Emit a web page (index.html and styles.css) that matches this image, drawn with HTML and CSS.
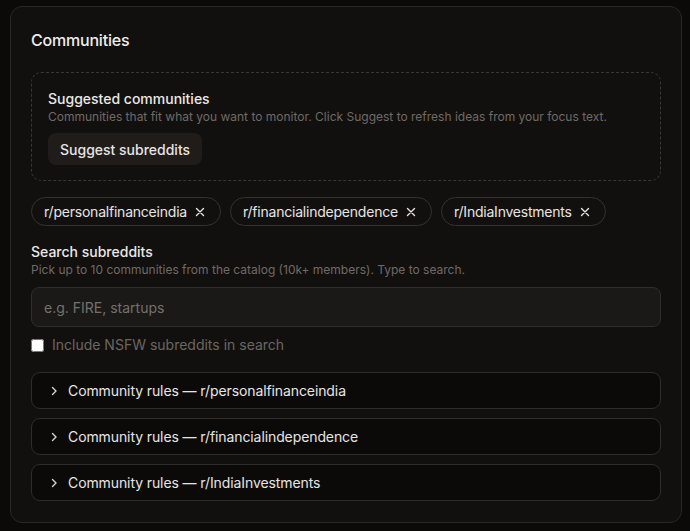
FILE: index.html
```html
<!DOCTYPE html>
<html lang="en">
<head>
    <meta charset="UTF-8">
    <meta name="viewport" content="width=device-width, initial-scale=1.0">
    <title>Communities</title>
    <link rel="stylesheet" href="styles.css">
</head>
<body>
    <section class="card">
        <h2 class="card-title">Communities</h2>

        <div class="suggest-box">
            <div class="field-label">Suggested communities</div>
            <p class="hint">Communities that fit what you want to monitor. Click Suggest to refresh ideas from your focus text.</p>
            <button class="btn-secondary" type="button">Suggest subreddits</button>
        </div>

        <div class="chips">
            <span class="chip">r/personalfinanceindia
                <button class="chip-remove" type="button" aria-label="Remove">
                    <svg viewBox="0 0 12 12" width="12" height="12"><path d="M2.5 2.5l7 7M9.5 2.5l-7 7"/></svg>
                </button>
            </span>
            <span class="chip">r/financialindependence
                <button class="chip-remove" type="button" aria-label="Remove">
                    <svg viewBox="0 0 12 12" width="12" height="12"><path d="M2.5 2.5l7 7M9.5 2.5l-7 7"/></svg>
                </button>
            </span>
            <span class="chip">r/IndiaInvestments
                <button class="chip-remove" type="button" aria-label="Remove">
                    <svg viewBox="0 0 12 12" width="12" height="12"><path d="M2.5 2.5l7 7M9.5 2.5l-7 7"/></svg>
                </button>
            </span>
        </div>

        <div class="search">
            <label class="field-label" for="subreddit-search">Search subreddits</label>
            <p class="hint">Pick up to 10 communities from the catalog (10k+ members). Type to search.</p>
            <input class="text-input" type="text" id="subreddit-search" placeholder="e.g. FIRE, startups">
            <label class="check-row">
                <input type="checkbox" class="check">
                <span>Include NSFW subreddits in search</span>
            </label>
        </div>

        <div class="rules">
            <details class="rule">
                <summary>
                    <svg class="chevron" viewBox="0 0 12 12" width="12" height="12"><path d="M4.5 2.5L8 6l-3.5 3.5"/></svg>
                    Community rules — r/personalfinanceindia
                </summary>
            </details>
            <details class="rule">
                <summary>
                    <svg class="chevron" viewBox="0 0 12 12" width="12" height="12"><path d="M4.5 2.5L8 6l-3.5 3.5"/></svg>
                    Community rules — r/financialindependence
                </summary>
            </details>
            <details class="rule">
                <summary>
                    <svg class="chevron" viewBox="0 0 12 12" width="12" height="12"><path d="M4.5 2.5L8 6l-3.5 3.5"/></svg>
                    Community rules — r/IndiaInvestments
                </summary>
            </details>
        </div>
    </section>
</body>
</html>
```

FILE: styles.css
```css
* {
    box-sizing: border-box;
}

body {
    margin: 0;
    padding: 6px 8px 0 10px;
    background-color: #0c0a09;
    color: #e7e5e4;
    font-family: Inter, "Noto Sans", sans-serif;
    font-size: 14px;
}

.card {
    background-color: #12100e;
    border: 1px solid #2a2725;
    border-radius: 12px;
    padding: 21px 20px 21px 20px;
}

.card-title {
    margin: 0 0 20px;
    font-size: 16px;
    line-height: 24px;
    font-weight: 500;
    letter-spacing: -0.2px;
    color: #f0eeec;
}

.suggest-box {
    border: 1px dashed #3a3633;
    border-radius: 10px;
    padding: 16px 16px 15px;
}

.field-label {
    display: block;
    font-size: 14px;
    line-height: 20px;
    font-weight: 500;
    color: #ebe9e7;
}

.hint {
    margin: 0;
    font-size: 12px;
    line-height: 16px;
    color: #6f6a66;
}

.btn-secondary {
    margin-top: 8px;
    height: 32px;
    padding: 0 12px;
    border: none;
    border-radius: 8px;
    background-color: #1f1c1a;
    color: #e7e5e4;
    font-family: inherit;
    font-size: 14px;
    font-weight: 500;
}

.chips {
    display: flex;
    flex-wrap: wrap;
    gap: 9px;
    margin-top: 16px;
}

.chip {
    display: inline-flex;
    align-items: center;
    gap: 7px;
    height: 29px;
    padding: 0 14px 0 12px;
    border: 1px solid #35312e;
    border-radius: 999px;
    font-size: 14px;
    letter-spacing: -0.22px;
    color: #e7e5e4;
}

.chip-remove {
    display: flex;
    padding: 0;
    border: none;
    background: none;
    color: #e7e5e4;
}

.chip-remove svg,
.chevron {
    fill: none;
    stroke: currentColor;
    stroke-width: 1.4;
    stroke-linecap: round;
    stroke-linejoin: round;
}

.search {
    margin-top: 16px;
}

.text-input {
    display: block;
    width: 100%;
    height: 40px;
    margin-top: 9px;
    padding: 0 12px;
    border: 1px solid #302d2a;
    border-radius: 8px;
    background-color: #1b1917;
    color: #e7e5e4;
    font-family: inherit;
    font-size: 14px;
}

.text-input::placeholder {
    color: #75706b;
}

.check-row {
    display: flex;
    align-items: center;
    gap: 8px;
    margin-top: 8px;
    line-height: 20px;
    color: #6b6662;
    font-size: 14px;
}

.check {
    width: 13px;
    height: 13px;
    margin: 0;
}

.rules {
    display: flex;
    flex-direction: column;
    gap: 9px;
    margin-top: 17px;
}

.rule {
    border: 1px solid #2f2c29;
    border-radius: 9px;
    background-color: #0c0a09;
}

.rule summary {
    display: flex;
    align-items: center;
    gap: 8px;
    height: 35px;
    padding: 0 16px;
    list-style: none;
    font-size: 14px;
    letter-spacing: -0.1px;
    color: #e7e5e4;
    cursor: pointer;
}

.rule summary::-webkit-details-marker {
    display: none;
}

.chevron {
    color: #d6d3d1;
}
```
